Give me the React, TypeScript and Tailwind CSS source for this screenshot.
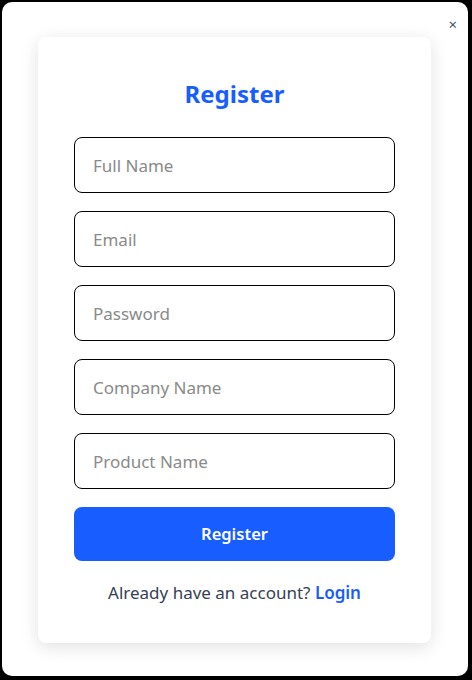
import { useState } from "react";

const fields = [
  { name: "fullName", placeholder: "Full Name", type: "text" },
  { name: "email", placeholder: "Email", type: "email" },
  { name: "password", placeholder: "Password", type: "password" },
  { name: "companyName", placeholder: "Company Name", type: "text" },
  { name: "productName", placeholder: "Product Name", type: "text" },
];

export default function App() {
  const [form, setForm] = useState<Record<string, string>>({});

  return (
    <div className="min-h-screen bg-black pl-[2px] pt-[2px] pr-[4px] pb-[4px] font-['Noto_Sans',sans-serif]">
      {/* Modal */}
      <div className="relative h-[674px] rounded-[10px] bg-white pl-[36px] pr-[37px] pt-[35px]">
        <button className="absolute right-[11px] top-[15px] text-[15px] leading-none text-gray-600">
          ×
        </button>

        {/* Card */}
        <div className="rounded-lg bg-white px-[36px] pt-[39px] pb-[37px] shadow-[0_4px_18px_rgba(0,0,0,0.12)]">
          <h2 className="mb-[25px] text-center text-[24px] font-bold leading-[36px] text-[#175dff]">
            Register
          </h2>

          <form className="flex flex-col gap-[18px]" onSubmit={(e) => e.preventDefault()}>
            {fields.map((field) => (
              <input
                key={field.name}
                type={field.type}
                placeholder={field.placeholder}
                value={form[field.name] || ""}
                onChange={(e) => setForm({ ...form, [field.name]: e.target.value })}
                className="h-[56px] w-full rounded-lg border border-black px-[18px] text-[17px] text-gray-800 placeholder:text-[#8a8a8a] focus:outline-none"
              />
            ))}

            <button
              type="submit"
              className="h-[54px] w-full rounded-lg bg-[#175dff] text-[16.5px] font-semibold text-white"
            >
              Register
            </button>
          </form>

          <p className="mt-[19px] text-center text-[17px] leading-[26px] text-gray-700">
            Already have an account?{" "}
            <a href="#" className="font-semibold text-[#175dff]">
              Login
            </a>
          </p>
        </div>
      </div>
    </div>
  );
}
